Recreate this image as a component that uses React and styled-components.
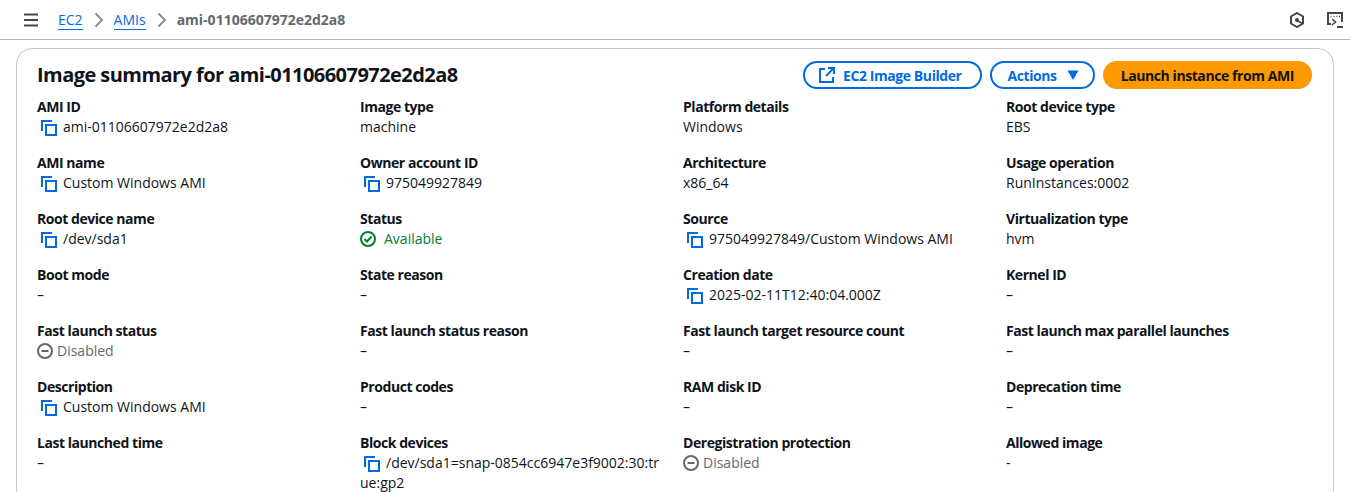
import React from 'react';
import styled, { createGlobalStyle } from 'styled-components';

const GlobalStyle = createGlobalStyle`
    html, body {
        margin: 0;
        padding: 0;
        height: 100%;
        overflow: hidden;
        background: #ffffff;
        font-family: "Open Sans", "Noto Sans", sans-serif;
        font-size: 14px;
        color: #0f141a;
    }
`;

const CopyIcon = () => (
    <CopySvg viewBox="0 0 16 16" fill="none" stroke="#006ce0" strokeWidth="2">
        <path d="M1 11V1h10" />
        <rect x="5" y="5" width="10" height="10" />
    </CopySvg>
);

const Available = () => (
    <Status $color="#00802f" $gap="8px">
        <svg width="16" height="16" viewBox="0 0 16 16" fill="none" stroke="#00802f" strokeWidth="2">
            <circle cx="8" cy="8" r="7" />
            <path d="M4.5 8l2.5 2.5 4.5-5" />
        </svg>
        Available
    </Status>
);

const Disabled = () => (
    <Status $color="#656871" $gap="4px">
        <svg width="16" height="16" viewBox="0 0 16 16" fill="none" stroke="#656871" strokeWidth="2">
            <circle cx="8" cy="8" r="7" />
            <path d="M4.5 8h7" />
        </svg>
        Disabled
    </Status>
);

const copy = (text) => (
    <>
        <CopyIcon />
        {text}
    </>
);

const fields = [
    ['AMI ID', copy('ami-01106607972e2d2a8')],
    ['Image type', 'machine'],
    ['Platform details', 'Windows'],
    ['Root device type', 'EBS'],
    ['AMI name', copy('Custom Windows AMI')],
    ['Owner account ID', copy('975049927849')],
    ['Architecture', 'x86_64'],
    ['Usage operation', 'RunInstances:0002'],
    ['Root device name', copy('/dev/sda1')],
    ['Status', <Available />],
    ['Source', copy('975049927849/Custom Windows AMI')],
    ['Virtualization type', 'hvm'],
    ['Boot mode', '–'],
    ['State reason', '–'],
    ['Creation date', copy('2025-02-11T12:40:04.000Z')],
    ['Kernel ID', '–'],
    ['Fast launch status', <Disabled />],
    ['Fast launch status reason', '–'],
    ['Fast launch target resource count', '–'],
    ['Fast launch max parallel launches', '–'],
    ['Description', copy('Custom Windows AMI')],
    ['Product codes', '–'],
    ['RAM disk ID', '–'],
    ['Deprecation time', '–'],
    ['Last launched time', '–'],
    ['Block devices', copy('/dev/sda1=snap-0854cc6947e3f9002:30:true:gp2')],
    ['Deregistration protection', <Disabled />],
    ['Allowed image', '-'],
];

const App = () => {
    return (
        <>
            <GlobalStyle />
            <TopBar>
                <Menu viewBox="0 0 16 16" stroke="#424650" strokeWidth="2">
                    <path d="M1 2.5h14M1 8h14M1 13.5h14" />
                </Menu>
                <Crumbs>
                    <Crumb href="#">EC2</Crumb>
                    <Chevron />
                    <Crumb href="#">AMIs</Crumb>
                    <Chevron />
                    <Current>ami-01106607972e2d2a8</Current>
                </Crumbs>
                <TopIcons>
                    <svg width="16" height="16" viewBox="0 0 16 16" fill="none" stroke="#424650" strokeWidth="2">
                        <path d="M8 1l6 3.5v7L8 15l-6-3.5v-7z" />
                        <circle cx="8" cy="8" r="2" fill="#424650" stroke="none" />
                        <path d="M8 8.5l5.5 3" strokeWidth="1.5" />
                    </svg>
                    <svg width="16" height="16" viewBox="0 0 16 16" fill="none" stroke="#424650" strokeWidth="2">
                        <path d="M4 12H1V1h14v9" />
                        <path d="M3.5 4.5h1M6.5 4.5h1M9.5 4.5h1M12 4.5h1" strokeWidth="1.5" />
                        <path d="M5 7l3.5 3L5 13" strokeWidth="1.6" />
                        <path d="M10 15h6" />
                    </svg>
                </TopIcons>
            </TopBar>
            <Card>
                <CardHeader>
                    <Title>Image summary for ami-01106607972e2d2a8</Title>
                    <Actions>
                        <Button $left="14px" $right="18px">
                            <svg width="16" height="16" viewBox="0 0 16 16" fill="none" stroke="#006ce0" strokeWidth="2">
                                <path d="M14 10v5H1V2h5" />
                                <path d="M9 1h6v6M15 1L7 9" />
                            </svg>
                            EC2 Image Builder
                        </Button>
                        <Button $left="16px" $right="12px">
                            Actions
                            <svg width="16" height="16" viewBox="0 0 16 16" fill="#006ce0">
                                <path d="M2.5 3.5h11L8 13z" />
                            </svg>
                        </Button>
                        <Button $primary $left="16px" $right="16px">Launch instance from AMI</Button>
                    </Actions>
                </CardHeader>
                <Grid>
                    {fields.map(([label, value]) => (
                        <Field key={label}>
                            <Label>{label}</Label>
                            <Value>{value}</Value>
                        </Field>
                    ))}
                </Grid>
            </Card>
        </>
    );
};

export default App;

const Chevron = () => (
    <ChevronSvg viewBox="0 0 16 16" fill="none" stroke="#8c8c94" strokeWidth="2">
        <path d="M4.5 1.5L11 8l-6.5 6.5" />
    </ChevronSvg>
);

const TopBar = styled.header`
    height: 39px;
    box-sizing: content-box;
    border-bottom: 1px solid #b4b4bb;
    display: flex;
    align-items: center;
    padding: 0 7px 0 23px;
`;

const Menu = styled.svg`
    width: 16px;
    height: 16px;
    flex: none;
`;

const Crumbs = styled.nav`
    display: flex;
    align-items: center;
    margin-left: 19px;
    flex: 1;
    line-height: 20px;
`;

const Crumb = styled.a`
    color: #006ce0;
    text-decoration: none;
    border-bottom: 1px solid #006ce0;
    line-height: 19px;
`;

const ChevronSvg = styled.svg`
    width: 16px;
    height: 16px;
    margin: 0 7px 0 8px;
    flex: none;
`;

const Current = styled.span`
    color: #656871;
    font-weight: 700;
`;

const TopIcons = styled.div`
    display: flex;
    align-items: center;
    gap: 22px;
`;

const Card = styled.section`
    margin: 8px 16px 0 16px;
    border: 1px solid #c6c6cd;
    border-radius: 16px;
    padding: 11px 21px 20px 20px;
`;

const CardHeader = styled.div`
    display: flex;
    align-items: center;
    justify-content: space-between;
    height: 30px;
`;

const Title = styled.h1`
    margin: 0;
    font-size: 20px;
    line-height: 24px;
    font-weight: 700;
    letter-spacing: -0.55px;
`;

const Actions = styled.div`
    display: flex;
    gap: 8px;
`;

const Button = styled.button`
    height: 28px;
    box-sizing: border-box;
    display: inline-flex;
    align-items: center;
    gap: 8px;
    padding: 0 ${(p) => p.$right} 0 ${(p) => p.$left};
    border-radius: 20px;
    border: 2px solid ${(p) => (p.$primary ? '#ff9900' : '#006ce0')};
    background: ${(p) => (p.$primary ? '#ff9900' : '#ffffff')};
    color: ${(p) => (p.$primary ? '#0f141a' : '#006ce0')};
    font-family: inherit;
    font-size: 14px;
    font-weight: 700;
    letter-spacing: -0.42px;
    cursor: pointer;
`;

const Grid = styled.div`
    display: grid;
    grid-template-columns: repeat(4, 303px);
    column-gap: 20px;
    row-gap: 16px;
    margin-top: 7px;
`;

const Field = styled.div`
    min-width: 0;
`;

const Label = styled.div`
    font-weight: 700;
    line-height: 20px;
    letter-spacing: -0.45px;
`;

const Value = styled.div`
    line-height: 20px;
    word-break: break-all;
`;

const CopySvg = styled.svg`
    width: 16px;
    height: 16px;
    margin: 3px 6px 0 4px;
    vertical-align: top;
`;

const Status = styled.span`
    display: flex;
    align-items: center;
    height: 20px;
    gap: ${(p) => p.$gap};
    color: ${(p) => p.$color};
`;
